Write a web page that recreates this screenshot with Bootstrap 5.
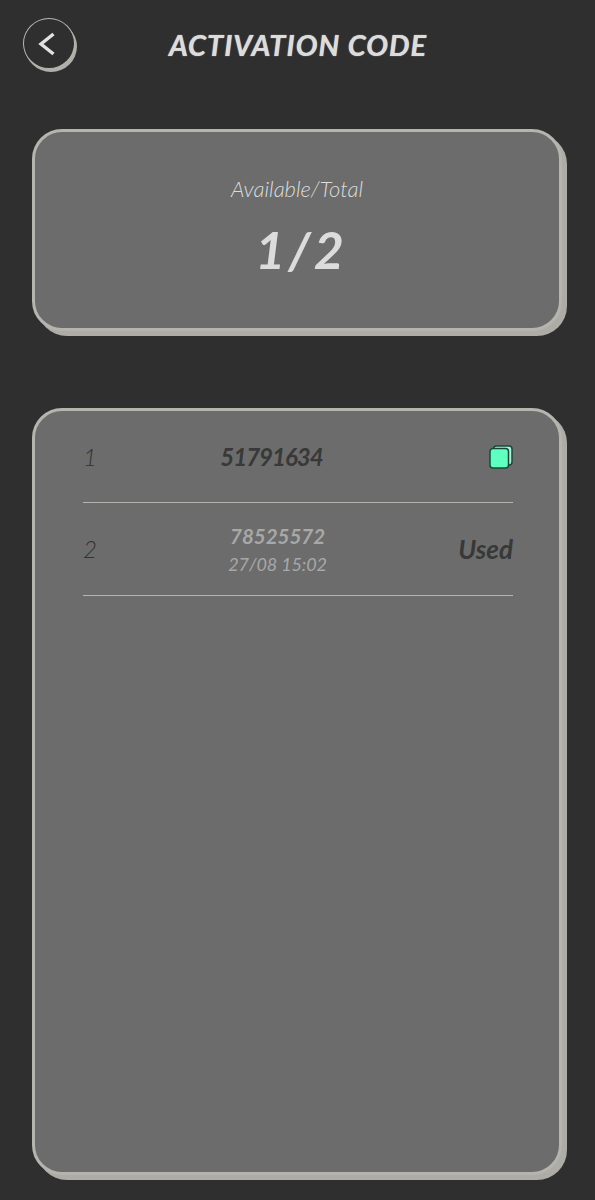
<!DOCTYPE html>
<html lang="en">
<head>
<meta charset="utf-8">
<title>Activation Code</title>
<link href="https://cdn.jsdelivr.net/npm/bootstrap@5.3.0/dist/css/bootstrap.min.css" rel="stylesheet">
<style>
html, body { height: 1200px; overflow: hidden; }
body { background: #2f2f2f; font-family: "Lato", "Liberation Sans", sans-serif; font-style: italic; }
.top-bar { height: 129px; padding: 18px 0 0 23px; }
.back-btn { width: 52px; height: 51px; border-radius: 50%; border: 1.5px solid #b9b8b3; background: #2f2f2f; box-shadow: 2px 3px 0 #b0afa9; padding: 0; flex: none; }
.back-btn svg { margin-right: 5px; }
.page-title { width: 446px; text-align: center; color: #dcdcdc; font-size: 29px; font-weight: 700; line-height: 54px; margin: 0; letter-spacing: 1px; text-shadow: 0 0 1px #dcdcdc; }
.panel-box { margin-left: 32px; width: 530px; background: #6c6c6c; border: 3px solid #b5b4ae; border-radius: 30px; box-shadow: 5px 5px 0 #adaca6; }
.panel-sum { height: 202px; padding: 43px 0 0; text-align: center; color: #dcdcdc; }
.sum-label { font-size: 22px; font-weight: 300; line-height: 28px; }
.sum-value { font-size: 52px; font-weight: 700; line-height: 60px; margin-top: 16px; padding-left: 8px; letter-spacing: 3px; }
.panel-list { height: 767px; margin-top: 77px; padding: 0 46px 0 48px; }
.code-row { border-bottom: 1px solid #b5b4ae; color: #383838; }
.row-first { height: 92px; }
.row-second { height: 93px; }
.row-num { font-size: 24px; font-weight: 300; color: #333; }
.code-main { font-size: 24px; font-weight: 700; letter-spacing: -1px; margin-right: 43px; }
.code-used { text-align: center; color: #a8a8a8; padding-top: 3px; }
.code-used-num { font-size: 20.5px; font-weight: 700; line-height: 27px; }
.code-used-date { font-size: 18px; font-weight: 400; line-height: 29px; letter-spacing: -.1px; }
.used-tag { font-size: 26px; font-weight: 700; }
</style>
</head>
<body>
<div class="top-bar d-flex align-items-start">
  <button class="back-btn d-flex align-items-center justify-content-center" type="button" aria-label="Back">
    <svg width="18" height="24" viewBox="0 0 18 24"><path d="M15.5 2 L3 12 L15.5 22" fill="none" stroke="#e2e2e2" stroke-width="3.4"/></svg>
  </button>
  <h1 class="page-title">ACTIVATION CODE</h1>
</div>
<section class="panel-box panel-sum">
  <div class="sum-label">Available/Total</div>
  <div class="sum-value">1/2</div>
</section>
<section class="panel-box panel-list">
  <div class="code-row row-first d-flex justify-content-between align-items-center">
    <span class="row-num">1</span>
    <span class="code-main">51791634</span>
    <svg width="24" height="24" viewBox="0 0 24 24" aria-label="Copy">
      <rect x="4.5" y="1" width="18.5" height="19" rx="3" fill="#a9f5d8" stroke="#17493a" stroke-width="1.5"/>
      <rect x="1" y="3.5" width="18.5" height="19.5" rx="3" fill="#5fffc0" stroke="#17493a" stroke-width="1.5"/>
    </svg>
  </div>
  <div class="code-row row-second d-flex justify-content-between align-items-center">
    <span class="row-num">2</span>
    <div class="code-used">
      <div class="code-used-num">78525572</div>
      <div class="code-used-date">27/08 15:02</div>
    </div>
    <span class="used-tag">Used</span>
  </div>
</section>
<script src="https://cdn.jsdelivr.net/npm/bootstrap@5.3.0/dist/js/bootstrap.bundle.min.js"></script>
</body>
</html>
